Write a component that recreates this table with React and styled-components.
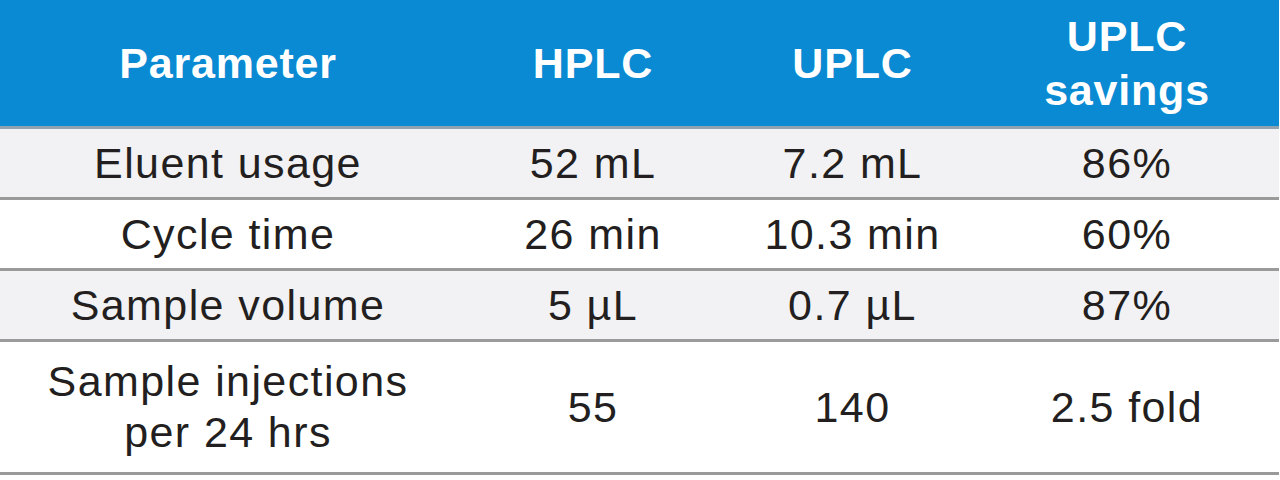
import React from 'react';
import styled, { createGlobalStyle } from 'styled-components';

const GlobalStyle = createGlobalStyle`
  html, body {
    margin: 0;
    padding: 0;
    background: #ffffff;
  }
  body {
    font-family: "Liberation Sans", Arial, sans-serif;
  }
`;

const Table = styled.table`
  width: 1279px;
  border-collapse: collapse;
  table-layout: fixed;
  font-family: "Liberation Sans", Arial, sans-serif;
  color: #231f20;
`;

const HeadCell = styled.th`
  height: 126px;
  padding: 0;
  background: #0a8ad2;
  color: #ffffff;
  font-size: 43px;
  font-weight: 700;
  letter-spacing: 0.8px;
  line-height: 54px;
  text-align: center;
  vertical-align: middle;
  border-bottom: 3px solid #8fa2b0;
`;

const Row = styled.tr`
  background: ${(props) => (props.shaded ? '#f2f2f4' : '#ffffff')};
`;

const Cell = styled.td`
  height: ${(props) => (props.tall ? '130px' : '68px')};
  padding: 0;
  font-size: 43px;
  letter-spacing: 1.4px;
  line-height: 51px;
  text-align: center;
  vertical-align: middle;
  border-bottom: 3px solid #9a9a9a;
`;

const columns = ['456px', '274px', '245px', '304px'];

const rows = [
  { name: 'Eluent usage', hplc: '52 mL', uplc: '7.2 mL', saving: '86%' },
  { name: 'Cycle time', hplc: '26 min', uplc: '10.3 min', saving: '60%' },
  { name: 'Sample volume', hplc: '5 µL', uplc: '0.7 µL', saving: '87%' },
  { name: ['Sample injections', 'per 24 hrs'], hplc: '55', uplc: '140', saving: '2.5 fold', tall: true },
];

export default function App() {
  return (
    <>
      <GlobalStyle />
      <Table>
        <colgroup>
          {columns.map((w, i) => (
            <col key={i} style={{ width: w }} />
          ))}
        </colgroup>
        <thead>
          <tr>
            <HeadCell>Parameter</HeadCell>
            <HeadCell>HPLC</HeadCell>
            <HeadCell>UPLC</HeadCell>
            <HeadCell>UPLC<br />savings</HeadCell>
          </tr>
        </thead>
        <tbody>
          {rows.map((r, i) => (
            <Row key={i} shaded={i % 2 === 0}>
              <Cell tall={r.tall}>
                {Array.isArray(r.name) ? (
                  <>
                    {r.name[0]}
                    <br />
                    {r.name[1]}
                  </>
                ) : (
                  r.name
                )}
              </Cell>
              <Cell tall={r.tall}>{r.hplc}</Cell>
              <Cell tall={r.tall}>{r.uplc}</Cell>
              <Cell tall={r.tall}>{r.saving}</Cell>
            </Row>
          ))}
        </tbody>
      </Table>
    </>
  );
}
